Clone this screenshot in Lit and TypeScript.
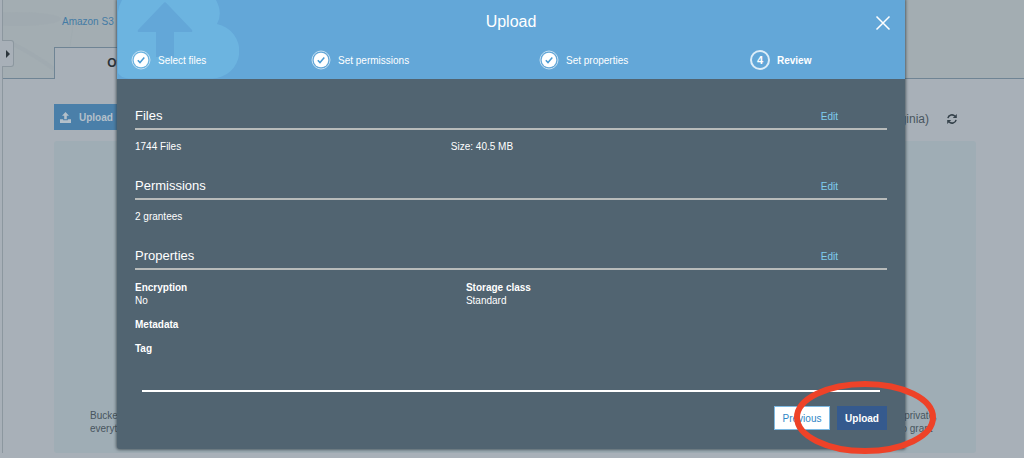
import { LitElement, html, css, svg } from "lit";
import { customElement } from "lit/decorators.js";

const tick = svg`<circle cx="10" cy="10" r="9" fill="none" stroke="#c3dff2" stroke-width="1"/><circle cx="10" cy="10" r="7.3" fill="#fff"/><path d="M6.8 10.2l2.2 2.4 4.3-5" fill="none" stroke="#4a9bd3" stroke-width="1.5"/>`;

@customElement("app-root")
export class AppRoot extends LitElement {
  static styles = css`
    :host {
      display: block;
      position: relative;
      min-height: 100vh;
      box-sizing: border-box;
      overflow: hidden;
      padding: 0 0 5px 2px;
      background: #a8b0b8;
      color: #48555e;
      font: 10px/13px "Liberation Sans", Arial, sans-serif;
    }
    * { box-sizing: border-box; }
    h1, h2, p, dl, dd, dt, ol { margin: 0; padding: 0; font-size: inherit; font-weight: inherit; }
    button { font: inherit; border: 0; padding: 0; margin: 0; background: none; color: inherit; }
    a { text-decoration: none; }
    svg { display: block; }

    .page { border-left: 1px solid #8c979f; min-height: calc(100vh - 5px); display: flex; flex-direction: column; }
    .top {
      position: relative;
      height: 79px;
      background: #a3adb2;
      border-bottom: 1px solid #6f8494;
      display: flex;
      flex-direction: column;
      justify-content: space-between;
      padding-left: 51px;
    }
    .swirl { position: absolute; left: 0; top: 0; }
    .crumb { position: relative; padding: 15px 0 0 8px; color: #447ba5; }
    .tab {
      position: relative;
      width: 160px;
      height: 32px;
      margin-bottom: -1px;
      background: #a8b0b8;
      border: 1px solid #6f8494;
      border-bottom: 0;
      color: #2a3338;
      font-size: 12px;
      font-weight: bold;
      text-align: center;
    }
    .drawer {
      position: absolute;
      left: 2px;
      top: 40px;
      width: 12px;
      height: 27px;
      border: 1px solid #8c979f;
      border-left: 0;
      border-radius: 0 3px 3px 0;
      background: #a8b0b8;
      display: grid;
      place-items: center;
    }
    .bar { display: flex; align-items: center; justify-content: space-between; padding: 25px 67px 11px 51px; }
    .put {
      display: flex;
      align-items: center;
      gap: 8px;
      width: 72px;
      height: 26px;
      padding-left: 6px;
      background: #4a7fa9;
      color: #b4c0ca;
      font-weight: bold;
    }
    .region { display: flex; align-items: center; gap: 18px; font-size: 12px; padding-top: 4px; }
    .panel {
      flex: 1;
      margin: 0 48px 0 51px;
      padding: 0 39px 18px 36px;
      border-radius: 3px;
      background: #9fadb5;
      display: flex;
      align-items: flex-end;
      justify-content: space-between;
    }
    .mid { text-align: center; }

    .modal {
      position: absolute;
      left: 117px;
      right: 119px;
      top: 0;
      border-radius: 0 0 3px 3px;
      background: #516471;
      color: #fff;
      box-shadow: 0 0 3px 1px rgba(50, 62, 70, 0.7);
    }
    .head { position: relative; background: #63a7d8; height: 79px; padding: 12px 14px 0 14px; display: flex; flex-direction: column; gap: 18px; }
    .cloud { position: absolute; left: 0; top: 0; }
    .title { position: relative; display: flex; justify-content: center; font-size: 16px; line-height: 20px; }
    .close { position: absolute; right: 0; top: 3px; width: 16px; height: 16px; }
    .steps { position: relative; list-style: none; display: grid; grid-template-columns: 180fr 228fr 211fr 141fr; }
    .step { display: flex; align-items: center; gap: 7px; }
    .now { font-weight: bold; }
    .num { width: 20px; height: 20px; border: 2px solid #dcedf8; border-radius: 50%; font-size: 11px; line-height: 16px; text-align: center; }

    .body { padding: 25px 18px 0; }
    .sec { height: 70px; }
    .sec.last { height: auto; }
    .sh { display: flex; justify-content: space-between; align-items: center; height: 26px; padding-right: 49px; border-bottom: 2px solid #b8bbba; }
    .sh h2 { font-size: 13px; line-height: 22px; }
    .edit { color: #7fcdee; padding-top: 1px; }
    .cols { display: grid; grid-template-columns: 42fr 58fr; padding-top: 10px; }
    .props { display: grid; grid-template-columns: 44fr 56fr; row-gap: 11px; padding-top: 11px; }
    .wide { grid-column: 1 / -1; }
    dt { font-weight: bold; }
    .foot { margin: 35px 18px 0; padding-bottom: 19px; }
    .rule { height: 2px; margin: 0 7px 14px; background: #fff; border: 0; }
    .acts { display: flex; justify-content: flex-end; gap: 7px; }
    .prev { width: 56px; height: 24px; background: #fff; color: #2f86c6; border: 1px solid #7db9e2; }
    .go { width: 50px; height: 24px; background: #355a8e; font-weight: bold; }
    .ring { position: absolute; right: -32px; bottom: -6px; pointer-events: none; }
  `;

  private section(name: string, cells: string[]) {
    return html`<section class="sec">
      <div class="sh"><h2>${name}</h2><a class="edit" href="#">Edit</a></div>
      <div class="cols">${cells.map((c) => html`<span>${c}</span>`)}</div>
    </section>`;
  }

  render() {
    return html`
      <div class="page">
        <header class="top">
          <svg class="swirl" width="115" height="78" viewBox="0 0 115 78">
            <ellipse cx="14" cy="19" rx="44" ry="7" fill="#9ba7ad" opacity=".3"/>
            <path d="M70 14 Q70 32 67 46" fill="none" stroke="#9ba7ad" opacity=".4"/>
            <path d="M10 44 Q30 54 51 69" fill="none" stroke="#98a5ab" stroke-width="4" opacity=".25"/>
          </svg>
          <a class="crumb" href="#">Amazon S3</a>
          <button class="tab">Overview</button>
        </header>
        <div class="bar">
          <button class="put">
            <svg width="11" height="11" viewBox="0 0 11 11" fill="#b4c0ca"><path d="M5.5 0L9 3.8H6.8V7.2H4.2V3.8H2zM0 7.2h3.2v1h4.6v-1H11V11H0z"/></svg>
            Upload
          </button>
          <div class="region">
            <span>US East (N. Virginia)</span>
            <svg width="10" height="10" viewBox="0 0 10 10" fill="none" stroke="#35424b" stroke-width="1.5"><path d="M.9 4.2A4.1 4.1 0 0 1 8 2.3M9.1 5.8A4.1 4.1 0 0 1 2 7.7"/><path d="M9.8 0v4H5.8zM.2 10V6h4z" fill="#35424b" stroke="none"/></svg>
          </div>
        </div>
        <main class="panel">
          <p>Buckets are globally unique containers for<br />everything that you store in Amazon S3.</p>
          <p class="mid">By default, the permissions on an object are private,<br />but you can set up access control policies to grant</p>
        </main>
      </div>
      <button class="drawer" aria-label="Open panel">
        <svg width="4" height="8" viewBox="0 0 4 8"><path d="M0 0l4 4-4 4z" fill="#2c363c"/></svg>
      </button>

      <div class="modal" role="dialog" aria-label="Upload">
        <div class="head">
          <svg class="cloud" width="122" height="79" viewBox="0 0 122 79">
            <path d="M5 0H99Q106 13 100 24A27.5 27.5 0 0 1 95 78.500H12Q4 78 1 73V12Q2 5 5 0z" fill="#6cb4e0"/>
            <path d="M46.500 3.200Q48 1.500 49.500 3.200L75 30Q76 32 74 32H57V57H39V32H22Q20 32 21 30z" fill="#63a7d8"/>
          </svg>
          <div class="title">
            <h1>Upload</h1>
            <button class="close" aria-label="Close"><svg width="16" height="16" viewBox="0 0 16 16"><path d="M1.500 1.500l13 13M14.500 1.500l-13 13" stroke="#fff" stroke-width="1.500"/></svg></button>
          </div>
          <ol class="steps">
            ${["Select files", "Set permissions", "Set properties"].map(
              (s) => html`<li class="step"><svg width="20" height="20" viewBox="0 0 20 20">${tick}</svg>${s}</li>`
            )}
            <li class="step now"><span class="num">4</span>Review</li>
          </ol>
        </div>
        <div class="body">
          ${this.section("Files", ["1744 Files", "Size: 40.5 MB"])}
          ${this.section("Permissions", ["2 grantees"])}
          <section class="sec last">
            <div class="sh"><h2>Properties</h2><a class="edit" href="#">Edit</a></div>
            <dl class="props">
              <div><dt>Encryption</dt><dd>No</dd></div>
              <div><dt>Storage class</dt><dd>Standard</dd></div>
              <div class="wide"><dt>Metadata</dt></div>
              <div class="wide"><dt>Tag</dt></div>
            </dl>
          </section>
        </div>
        <footer class="foot">
          <hr class="rule" />
          <div class="acts">
            <button class="prev">Previous</button>
            <button class="go">Upload</button>
          </div>
        </footer>
        <svg class="ring" width="144" height="75" viewBox="0 0 144 75"><ellipse cx="72" cy="37.500" rx="68" ry="33.500" fill="none" stroke="#ee4228" stroke-width="6"/></svg>
      </div>
    `;
  }
}
